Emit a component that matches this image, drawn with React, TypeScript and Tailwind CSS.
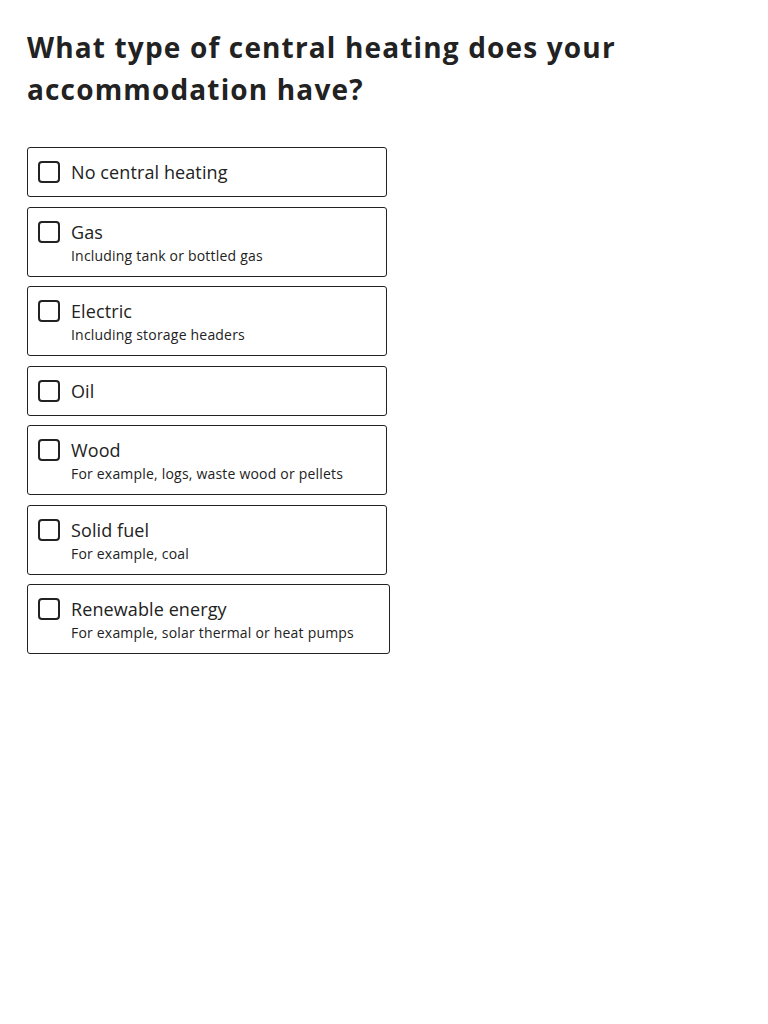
const options: { label: string; hint?: string }[] = [
  { label: 'No central heating' },
  { label: 'Gas', hint: 'Including tank or bottled gas' },
  { label: 'Electric', hint: 'Including storage headers' },
  { label: 'Oil' },
  { label: 'Wood', hint: 'For example, logs, waste wood or pellets' },
  { label: 'Solid fuel', hint: 'For example, coal' },
  { label: 'Renewable energy', hint: 'For example, solar thermal or heat pumps' },
]

export default function App() {
  return (
    <div
      className="min-h-screen bg-white px-[27px] pt-[26px] text-[#222222]"
      style={{ fontFamily: '"Open Sans", "Noto Sans", sans-serif' }}
    >
      <h1 className="max-w-[680px] text-[28px] font-bold leading-[42px] tracking-[1.15px]">
        What type of central heating does your accommodation have?
      </h1>

      <div className="mt-[37px] flex flex-col items-start gap-[9.5px]">
        {options.map((o) => (
          <label
            key={o.label}
            className="flex w-fit min-w-[360px] cursor-pointer items-start rounded-[3px] border border-[#222222] py-[10px] pl-[10px] pr-[35px]"
          >
            <span className="mt-[3px] h-[22px] w-[22px] shrink-0 rounded-[4px] border-2 border-[#222222]" />
            <span className="ml-[11px] flex flex-col">
              <span className="text-[18px] leading-[28px] tracking-[0.1px]">{o.label}</span>
              {o.hint && (
                <span className="text-[14px] leading-[20px] tracking-[0.2px]">{o.hint}</span>
              )}
            </span>
          </label>
        ))}
      </div>
    </div>
  )
}
